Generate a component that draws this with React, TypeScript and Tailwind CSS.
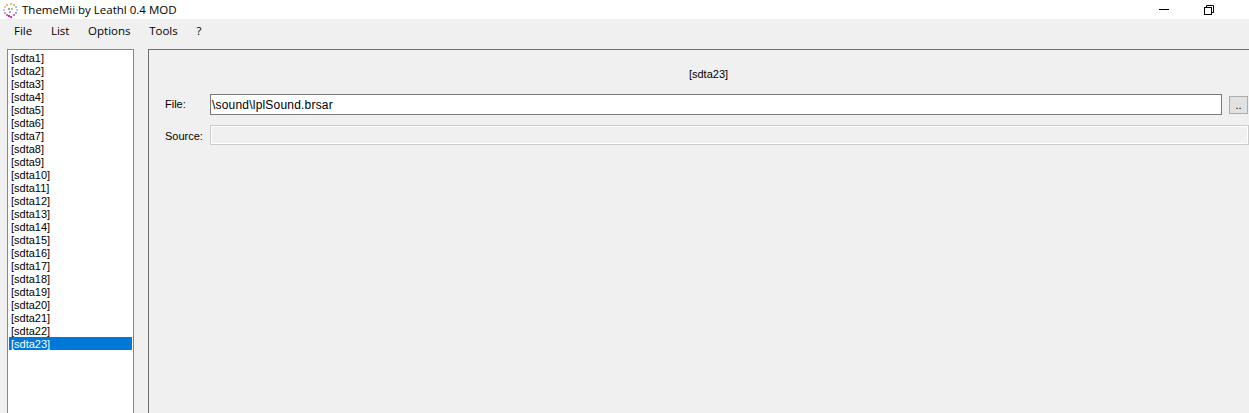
import React from "react";

const items = Array.from({ length: 23 }, (_, i) => `[sdta${i + 1}]`);
const menus = ["File", "List", "Options", "Tools", "?"];

function AppIcon() {
  const dots: [number, number, string][] = [
    [8, 1, "#e8c24a"], [11, 2, "#d9c56a"], [13, 4, "#9fc9d8"], [14, 7, "#a8d0e0"],
    [13, 10, "#b0a0d8"], [11, 12, "#d070d0"], [8, 14, "#d040c0"], [6, 13, "#c030d0"],
    [4, 12, "#e060c0"], [2, 10, "#c0a0e0"], [1, 7, "#c0c0c0"], [2, 4, "#e0d090"],
    [4, 2, "#e8b890"], [6, 6, "#a0a0b0"], [9, 6, "#b0c0a0"], [7, 9, "#c0a0c0"],
  ];
  return (
    <svg width="16" height="16" viewBox="0 0 16 16" className="ml-[2px] shrink-0">
      {dots.map(([x, y, c], i) => (
        <rect key={i} x={x} y={y} width="2" height="2" fill={c} />
      ))}
    </svg>
  );
}

export default function App() {
  return (
    <div className="flex h-[413px] w-[1249px] flex-col overflow-hidden bg-[#f0f0f0] font-['Liberation_Sans',sans-serif] text-[11px] text-black">
      {/* title bar */}
      <div className="flex h-[19px] items-center bg-white">
        <AppIcon />
        <span className="ml-[4px] font-['Open_Sans',sans-serif] text-[11.5px]">ThemeMii by Leathl 0.4 MOD</span>
        <div className="ml-auto mr-[35px] flex items-center gap-[35px]">
          <div className="h-px w-[10px] bg-black" />
          <svg width="10" height="10" viewBox="0 0 10 10" fill="none" stroke="black" strokeWidth="1">
            <rect x="0.5" y="2.5" width="7" height="7" fill="white" />
            <path d="M2.5 2.5V0.5H9.5V7.5H7.5" />
          </svg>
        </div>
      </div>

      {/* menu */}
      <div className="flex h-[30px] items-center gap-[18.7px] pb-[6px] pl-[14px] font-['Open_Sans',sans-serif] text-[11.5px]">
        {menus.map((m) => (
          <span key={m}>{m}</span>
        ))}
      </div>

      <div className="flex min-h-0 flex-1 pl-[7px]">
        {/* list */}
        <div className="h-full w-[127px] shrink-0 border border-b-0 border-[#828790] bg-white p-px leading-[15px]">
          {items.map((item, i) => (
            <div key={item} className={i === 22 ? "h-[13px] bg-[#0078d7] pl-[2px] text-white" : "h-[13px] pl-[2px]"}>
              {item}
            </div>
          ))}
        </div>

        {/* panel */}
        <div className="ml-[14px] h-full w-[1120px] shrink-0 border-l border-t border-[#6e6e6e]">
          <div className="pt-[17px] text-center leading-[14px]">[sdta23]</div>
          <div className="mt-[13px] flex items-center">
            <span className="ml-[16px] w-[45px]">File:</span>
            <div className="flex h-[21px] w-[1012px] items-center border border-[#7a7a7a] bg-white pl-[1px] text-[12px] tracking-[0.2px]">\sound\lplSound.brsar</div>
            <button className="ml-[7px] flex h-[18px] w-[19px] items-center justify-center border border-[#adadad] bg-[#e1e1e1] leading-[14px]">..</button>
          </div>
          <div className="mt-[10px] flex items-center">
            <span className="ml-[16px] w-[45px] pt-[2px]">Source:</span>
            <div className="h-[20px] w-[1039px] border border-[#cccccc] bg-[#f0f0f0] shadow-[inset_0_0_0_1px_#ffffff]" />
          </div>
        </div>
      </div>
    </div>
  );
}
